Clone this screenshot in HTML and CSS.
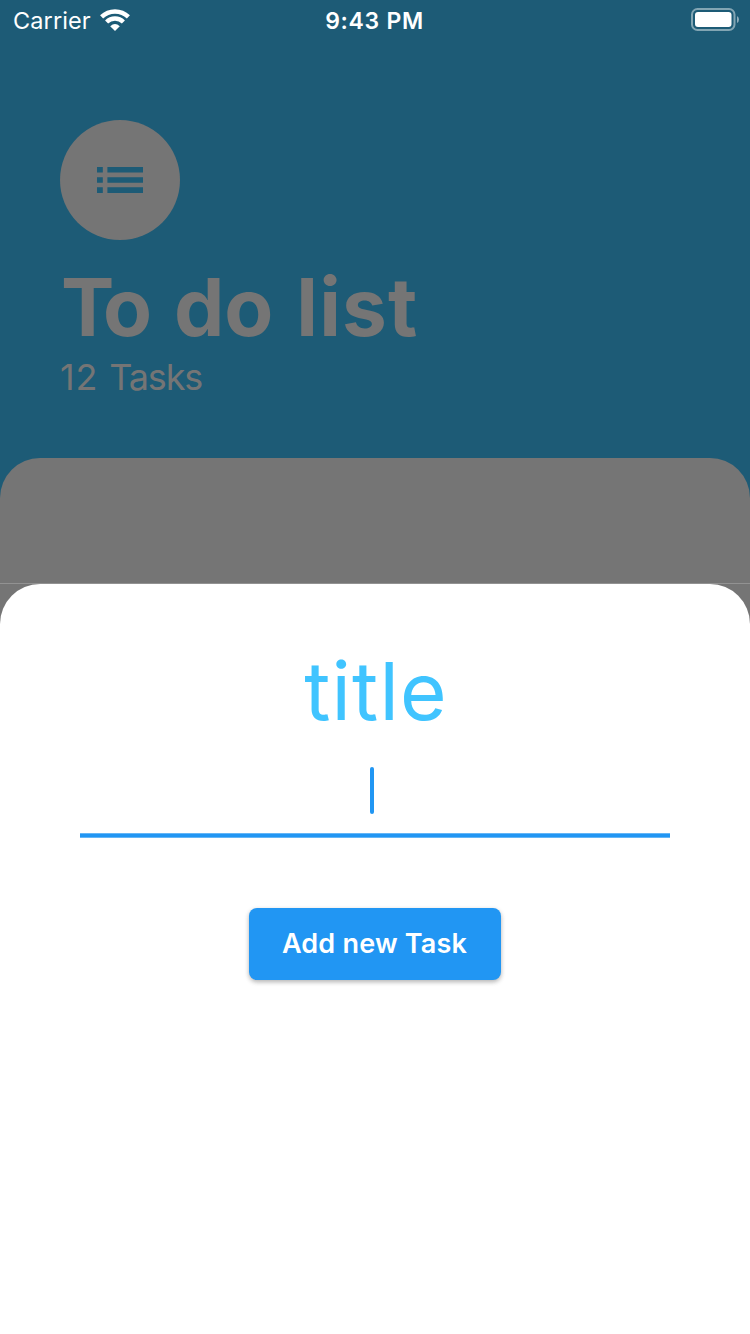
FILE: index.html
```html
<!DOCTYPE html>
<html lang="en">
<head>
<meta charset="utf-8">
<title>To do list</title>
<link rel="stylesheet" href="styles.css">
</head>
<body>
<div class="screen">
  <header class="status">
    <div class="status-left">
      <span class="carrier">Carrier</span>
      <svg class="wifi" width="30" height="22" viewBox="0 0 30 22" fill="none" stroke="#fff" stroke-width="4.4">
        <path d="M1.6 7.9A19.2 19.2 0 0 1 28.4 7.9"/>
        <path d="M6.6 13A12 12 0 0 1 23.4 13"/>
        <path d="M15 22L10.2 17.2Q15 12.8 19.8 17.2Z" fill="#fff" stroke="none"/>
      </svg>
    </div>
    <span class="time">9:43 PM</span>
    <div class="status-right">
      <svg width="48" height="24" viewBox="0 0 48 24">
        <rect x="1" y="1" width="42.5" height="21" rx="5.5" fill="none" stroke="#fff" stroke-opacity=".45" stroke-width="2"/>
        <rect x="4" y="4" width="36.5" height="15" rx="3" fill="#fff"/>
        <path d="M46 8Q48 9.2 48 11.5T46 15Z" fill="#fff" fill-opacity=".5"/>
      </svg>
    </div>
  </header>
  <section class="summary">
    <div class="badge">
      <svg width="46" height="26" viewBox="0 0 46 26" fill="#1d5b76">
        <path d="M0 0h5.8v5.6H0zM10.4 0H46v5.6H10.4zM0 10.2h5.8v5.6H0zM10.4 10.2H46v5.6H10.4zM0 20.3h5.8v5.6H0zM10.4 20.3H46v5.6H10.4z"/>
      </svg>
    </div>
    <h1 class="heading"><span class="kern">T</span>o do <span class="wide">list</span></h1>
    <p class="count">12 <span class="tight">Tasks</span></p>
  </section>
  <main class="tasks">
    <section class="sheet">
      <h2 class="sheet-title">title</h2>
      <div class="field"><span class="caret"></span></div>
      <button class="add">Add new Task</button>
    </section>
  </main>
</div>
</body>
</html>
```

FILE: styles.css
```css
* { box-sizing: border-box; margin: 0; padding: 0; }
body { font-family: Inter, "Liberation Sans", sans-serif; }
.screen {
  width: 750px;
  height: 1334px;
  overflow: hidden;
  display: flex;
  flex-direction: column;
  background: #1d5b76;
}
.status {
  height: 40px;
  display: grid;
  grid-template-columns: 1fr auto 1fr;
  align-items: center;
  padding: 0 11px 0 13px;
  color: #fff;
  font-size: 24px;
  line-height: 40px;
}
.status-left { display: flex; align-items: center; gap: 9px; }
.carrier { font-size: 23.5px; letter-spacing: .1px; padding-top: 2px; line-height: 38px; }
.wifi { display: block; }
.time { font-weight: 600; font-size: 23px; letter-spacing: .7px; padding: 2px 3px 0 0; line-height: 38px; }
.status-right { display: flex; justify-content: flex-end; }
.summary { height: 418px; padding: 80px 60px 0; color: #757575; }
.badge {
  width: 120px;
  height: 120px;
  border-radius: 50%;
  background: #757575;
  display: flex;
  align-items: center;
  justify-content: center;
}
.heading { margin-top: 19px; padding-left: 1px; font-size: 80px; line-height: 96px; font-weight: 700; word-spacing: 3px; white-space: nowrap; }
.kern { letter-spacing: -11.5px; }
.wide { margin-left: 1px; letter-spacing: 1.2px; }
.count { font-size: 36px; line-height: 44px; letter-spacing: .8px; }
.tight { letter-spacing: -1.1px; }
.tasks {
  flex: 1;
  display: flex;
  flex-direction: column;
  padding-top: 125px;
  border-radius: 40px 40px 0 0;
  background: linear-gradient(#929292, #929292) 0 125px / 100% 1px no-repeat #757575;
}
.sheet {
  flex: 1;
  margin-top: 1px;
  padding: 59px 80px 0;
  display: flex;
  flex-direction: column;
  align-items: center;
  border-radius: 40px 40px 0 0;
  background: #fff;
}
.sheet-title { padding-left: 2px; font-size: 80px; line-height: 96px; font-weight: 400; letter-spacing: 1.2px; color: #40c4ff; }
.field {
  width: 590px;
  height: 99px;
  padding: 28px 0 0 290px;
  background: linear-gradient(#a6d5fa, #2196f3 1px, #2196f3 4px, #a6d5fa) 0 100% / 100% 5px no-repeat;
}
.caret { display: block; width: 4px; height: 47px; border-radius: 2px; background: #2196f3; }
.add {
  width: 252px;
  height: 72px;
  margin-top: 70px;
  padding-right: 1px;
  border: 0;
  border-radius: 8px;
  background: #2196f3;
  color: #fff;
  font: 600 27px/72px Inter, "Liberation Sans", sans-serif;
  letter-spacing: .2px;
  white-space: nowrap;
  box-shadow: 0 2px 4px rgba(0, 0, 0, .24), 0 2px 6px rgba(0, 0, 0, .08);
}
```
